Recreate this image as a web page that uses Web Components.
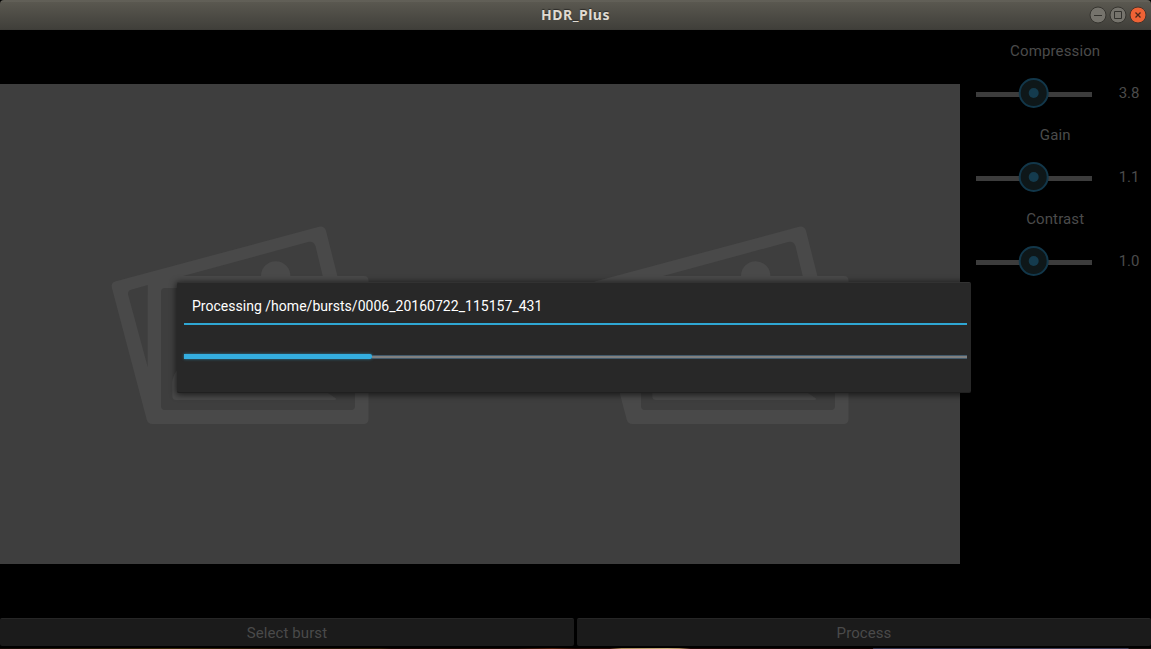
<!DOCTYPE html>
<html lang="en">
<head>
<meta charset="utf-8">
<title>HDR_Plus</title>
<style>
html,body{margin:0;height:100%;background:#000;overflow:hidden}
</style>
</head>
<body>
<hdr-window></hdr-window>
<script>
const define = (name, html) => {
  const t = document.createElement('template');
  t.innerHTML = html;
  customElements.define(name, class extends HTMLElement {
    constructor() {
      super();
      this.attachShadow({mode: 'open'}).append(t.content.cloneNode(true));
    }
  });
};

define('title-bar', `
<style>
:host{display:grid;grid-template-columns:1fr auto 1fr;align-items:center;height:30px;box-sizing:border-box;
 background:linear-gradient(#59574f 0,#69675f 1px,#5a5850 2px,#403f3a 29px,#3b3a36 30px);border-radius:4px 4px 0 0}
.t{grid-column:2;font:bold 14px/20px "Noto Sans",sans-serif;letter-spacing:.5px;color:#dfdbd2;text-shadow:0 -1px 1px #2c2b28}
.b{justify-self:end;display:flex;gap:2px;padding-right:4px}
svg{display:block}
</style>
<div class="t"><slot></slot></div>
<div class="b">
<svg width="18" height="18"><circle cx="9" cy="9" r="8" fill="#75736c" stroke="#35342f"/><path d="M5 9.5h8" stroke="#33322e"/></svg>
<svg width="18" height="18"><circle cx="9" cy="9" r="8" fill="#75736c" stroke="#35342f"/><path d="M5.5 5.5h7v7h-7z" fill="none" stroke="#33322e"/></svg>
<svg width="18" height="18"><circle cx="9" cy="9" r="8" fill="#ee6235" stroke="#45342b"/><path d="M6.500 6.500l5 5M11.500 6.500l-5 5" stroke="#4b281b" stroke-width="1.3"/></svg>
</div>`);

define('photo-stack', `
<style>:host{display:block;width:480px;height:480px}svg{display:block}</style>
<svg width="480" height="480" viewBox="0 84 480 480">
<path fill="#494949" fill-rule="evenodd" d="M115 281.5L319 226.8Q324 225.700 326 230.700L337.400 276H364Q368.500 276 368.500 280.500V419Q368.500 424 363.500 424H152.500Q148 424 146.700 419.500L111.800 287.500Q111 282.700 115 281.500ZM183 276L309 241.800Q313.500 241 315.500 246L322.700 276ZM147.700 285V367L128.200 295Q127.200 291 131 289.700ZM165 288Q161 288 161 292V406Q161 410 165 410H351Q355 410 355 406V292Q355 288 351 288Z"/>
<path fill="#494949" d="M261 276a14.700 14.700 0 0 1 29.400 0Z"/>
<path fill="#494949" d="M176 400Q172.300 400 172.300 396V382Q173 375 178 369L222 330L328 393L336 398.500Q336.500 400 334 400Z"/>
</svg>`);

define('value-slider', `
<style>
:host{display:block;height:84px;font:15px/18px Roboto,sans-serif;color:#4b4b4b;letter-spacing:.13px}
.l{height:42px;line-height:42px;text-align:center;padding-right:.6px}
.r{display:flex;height:42px;align-items:center}
svg{display:block;margin-left:16px;width:116px;flex:none}
.v{flex:1;text-align:right;padding-right:11.500px;letter-spacing:0}
</style>
<div class="l"><slot name="label"></slot></div>
<div class="r"><svg width="116" height="32" viewBox="0 0 116 32"><path d="M0 17.500h116" stroke="#3c3c3c" stroke-width="5"/><circle cx="57.700" cy="16" r="14" fill="#0e1719" stroke="#12374a" stroke-width="2"/><circle cx="57.700" cy="16" r="5" fill="#143b4e"/></svg>
<div class="v"><slot></slot></div></div>`);

define('flat-button', `
<style>
:host{display:block;height:28px;box-sizing:border-box;background:#1b1b1b;border-top:1px solid #262626;border-radius:2px;
 text-align:center;font:15px/29px Roboto,sans-serif;color:#4a4a4a;letter-spacing:.08px}
</style><slot></slot>`);

define('progress-dialog', `
<style>
:host{display:block;box-sizing:border-box;width:794.400px;height:111px;padding:0 4.400px 0 7px;background:#282828;
 border-top:1px solid #323232;border-bottom:1px solid #202020;border-radius:2px;box-shadow:0 1px 6px 1px rgba(0,0,0,.6)}
.t{height:42px;box-sizing:border-box;padding-left:8px;font:14px/46px Roboto,sans-serif;letter-spacing:.02px;color:#fff;border-bottom:2px solid #2fa7d4}
.p{display:flex;align-items:flex-start;margin-top:29px}
.f{width:188px;height:5px;background:#34aee0;border-radius:0 2px 2px 0;box-shadow:0 0 3px rgba(51,181,229,.65)}
.e{flex:1;height:2px;margin-top:1px;background:#808080;border:solid #425a6b;border-width:1px 0}
</style>
<div class="t"><slot></slot></div><div class="p"><div class="f"></div><div class="e"></div></div>`);

define('hdr-window', `
<style>
:host{display:flex;flex-direction:column;height:649px;width:1151px;background:#000;position:relative}
.m{display:flex;height:588px}
.view{display:flex;width:960px;height:480px;margin-top:54px;background:#3e3e3e}
.side{width:191px}
.a{display:grid;grid-template-columns:574px 574px;gap:3px;height:30px}
.s{height:1px;background:linear-gradient(90deg,#160b06,#3a2908 15%,#1e0e05 25%,#2b1a06 33%,#180500 34%,#200904 45%,#55200d 48%,#250a05 50%,#2b0c05 53%,#a88a59 54%,#c5ab77 58%,#aa8b5b 59%,#210805 60%,#120303 75.800%,#35354d 75.900%,#424059 98%,#17100e 98.100%)}
progress-dialog{position:absolute;left:177px;top:282px}
</style>
<title-bar>HDR_Plus</title-bar>
<div class="m"><div class="view"><photo-stack></photo-stack><photo-stack></photo-stack></div>
<div class="side">
<value-slider><span slot="label">Compression</span>3.8</value-slider>
<value-slider><span slot="label">Gain</span>1.1</value-slider>
<value-slider><span slot="label">Contrast</span>1.0</value-slider>
</div></div>
<div class="a"><flat-button>Select burst</flat-button><flat-button>Process</flat-button></div>
<div class="s"></div>
<progress-dialog>Processing /home/bursts/0006_20160722_115157_431</progress-dialog>`);
</script>
</body>
</html>
